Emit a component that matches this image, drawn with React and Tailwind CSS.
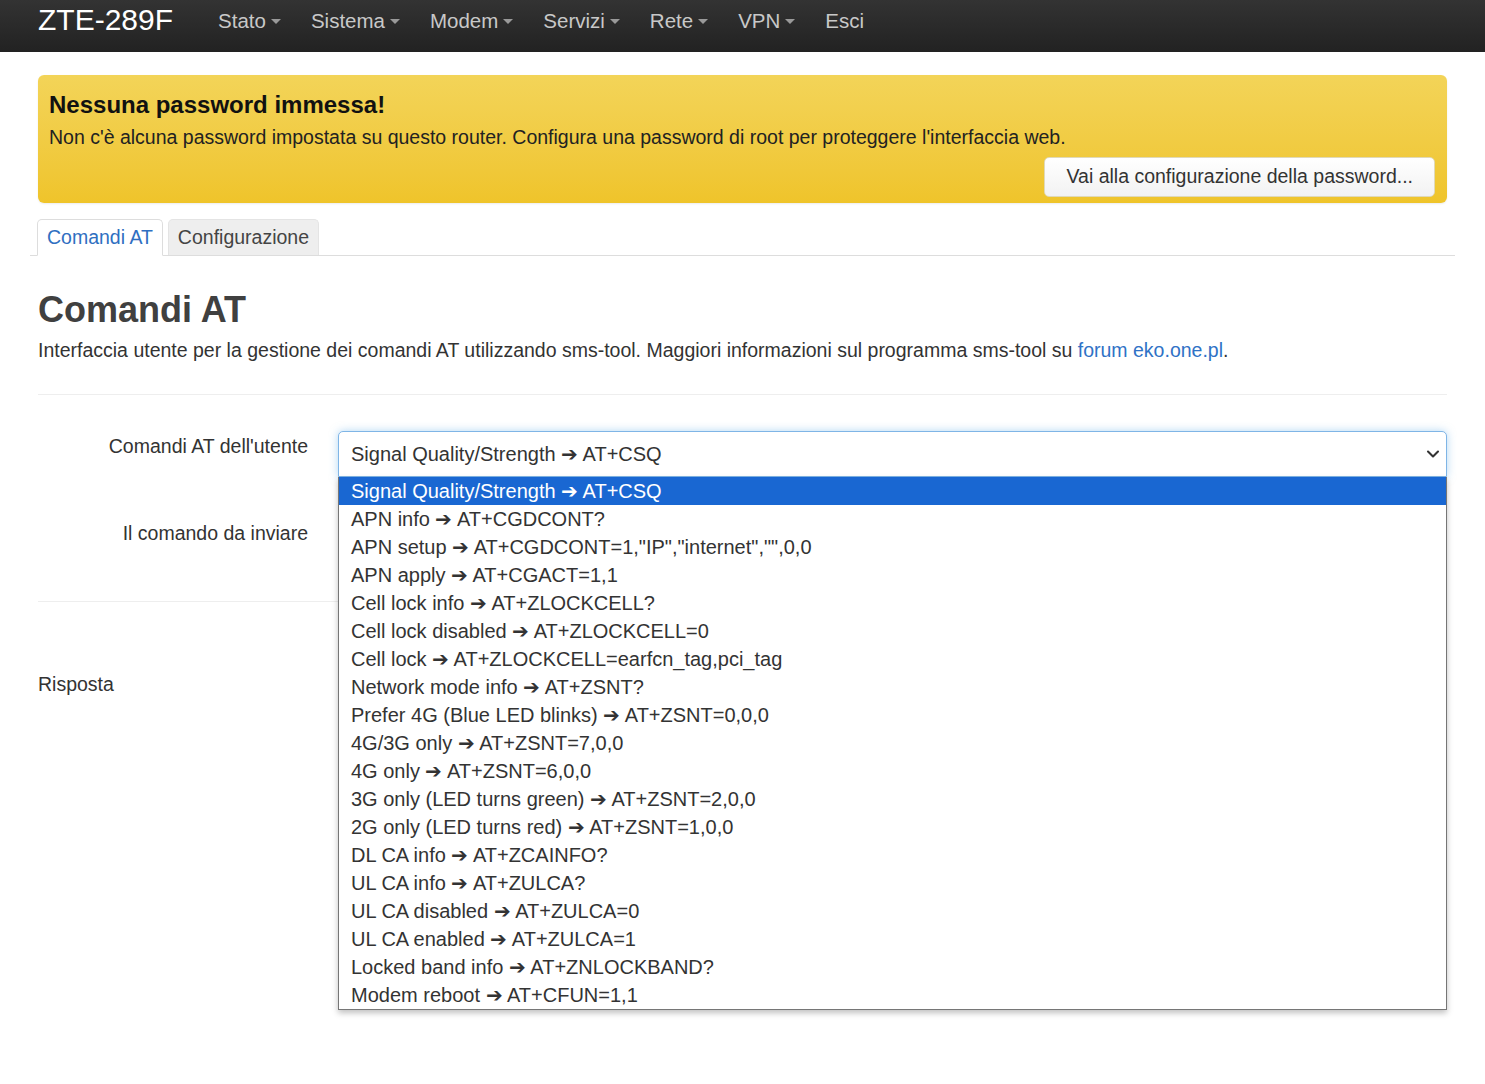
import { ChevronDown } from "lucide-react";

const menu = ["Stato", "Sistema", "Modem", "Servizi", "Rete", "VPN"];

const commands = [
  ["Signal Quality/Strength", "AT+CSQ"],
  ["APN info", "AT+CGDCONT?"],
  ["APN setup", 'AT+CGDCONT=1,"IP","internet","",0,0'],
  ["APN apply", "AT+CGACT=1,1"],
  ["Cell lock info", "AT+ZLOCKCELL?"],
  ["Cell lock disabled", "AT+ZLOCKCELL=0"],
  ["Cell lock", "AT+ZLOCKCELL=earfcn_tag,pci_tag"],
  ["Network mode info", "AT+ZSNT?"],
  ["Prefer 4G (Blue LED blinks)", "AT+ZSNT=0,0,0"],
  ["4G/3G only", "AT+ZSNT=7,0,0"],
  ["4G only", "AT+ZSNT=6,0,0"],
  ["3G only (LED turns green)", "AT+ZSNT=2,0,0"],
  ["2G only (LED turns red)", "AT+ZSNT=1,0,0"],
  ["DL CA info", "AT+ZCAINFO?"],
  ["UL CA info", "AT+ZULCA?"],
  ["UL CA disabled", "AT+ZULCA=0"],
  ["UL CA enabled", "AT+ZULCA=1"],
  ["Locked band info", "AT+ZNLOCKBAND?"],
  ["Modem reboot", "AT+CFUN=1,1"],
];

function Caret() {
  return <span className="ml-[5px] inline-block h-0 w-0 border-x-[5px] border-t-[5px] border-x-transparent border-t-[#999] align-middle" />;
}

export default function App() {
  return (
    <div className="min-h-[1084px] bg-white text-[#333] font-['Liberation_Sans',Arial,sans-serif]">
      {/* NAVBAR */}
      <div className="flex h-[52px] items-start bg-gradient-to-b from-[#333] to-[#222] px-[38px]">
        <div className="mt-[2px] text-[30px] leading-[36px] text-white">ZTE-289F</div>
        <nav className="ml-[45px] mt-[8px] flex items-center gap-[30px] text-[20.5px] leading-[26px] text-[#c8c8c8]">
          {menu.map((m) => (
            <span key={m} className="flex items-center">
              {m}
              <Caret />
            </span>
          ))}
          <span>Esci</span>
        </nav>
      </div>

      <div className="px-[38px] pt-[23px]">
        {/* ALERT */}
        <div className="rounded-[6px] bg-gradient-to-b from-[#f3d458] to-[#efc42a] px-[11px] pt-[15px] pb-[6px] shadow-[0_1px_2px_rgba(0,0,0,0.08)]">
          <h4 className="text-[24px] font-bold leading-[30px] text-[#111]">Nessuna password immessa!</h4>
          <p className="mt-[4px] text-[19.5px] leading-[26px] text-[#222]">
            Non c'è alcuna password impostata su questo router. Configura una password di root per proteggere l'interfaccia web.
          </p>
          <div className="mt-[7px] flex justify-end">
            <button className="mr-[1px] h-[40px] rounded-[5px] border border-[#e0d9b8] bg-gradient-to-b from-white to-[#f2f2f2] px-[21px] text-[19.5px] text-[#333]">
              Vai alla configurazione della password...
            </button>
          </div>
        </div>

        {/* TABS */}
        <div className="-mx-[8px] mt-[16px] flex gap-[5px] border-b border-[#ddd] px-[7px]">
          <div className="-mb-px rounded-t-[5px] border border-[#ddd] border-b-white bg-white px-[9px] pt-[5px] pb-[5px] text-[19.5px] leading-[25px] text-[#2f6fc1]">
            Comandi AT
          </div>
          <div className="rounded-t-[5px] border border-b-0 border-[#e4e4e4] bg-[#eee] px-[9px] pt-[5px] pb-[5px] text-[19.5px] leading-[25px] text-[#444]">
            Configurazione
          </div>
        </div>

        {/* HEADING */}
        <h2 className="mt-[34px] text-[36px] font-bold leading-[40px] text-[#404040]">Comandi AT</h2>
        <p className="mt-[8px] text-[19.5px] leading-[24px] text-[#333]">
          Interfaccia utente per la gestione dei comandi AT utilizzando sms-tool. Maggiori informazioni sul programma sms-tool su{" "}
          <span className="text-[#2f72c6]">forum eko.one.pl</span>.
        </p>
        <div className="mt-[32px] border-t border-[#eee]" />

        {/* FORM */}
        <div className="relative">
          <div className="mt-[36px] flex items-start gap-[30px]">
            <label className="w-[270px] pt-[2px] text-right text-[19.5px] leading-[26px]">Comandi AT dell'utente</label>
            <div className="relative flex-1">
              <div className="flex h-[46px] items-center justify-between rounded-t-[5px] border border-[#7fb5e6] bg-white pl-[12px] pr-[3px] text-[20px] shadow-[0_0_8px_rgba(102,175,233,0.5)]">
                <span>Signal Quality/Strength ➔ AT+CSQ</span>
                <ChevronDown size={20} strokeWidth={2.5} className="text-[#333]" />
              </div>

              {/* open dropdown list */}
              <div className="absolute left-0 right-0 top-[46px] z-10 border-x border-b border-[#767676] bg-white shadow-[0_3px_6px_rgba(0,0,0,0.25)]">
                {commands.map(([name, cmd], i) => (
                  <div
                    key={i}
                    className={`h-[28px] pl-[12px] text-[20px] leading-[28px] ${i === 0 ? "bg-[#1967d2] text-white" : "text-[#333]"}`}
                  >
                    {name} ➔ {cmd}
                  </div>
                ))}
              </div>
            </div>
          </div>

          <div className="mt-[40px] flex items-start gap-[30px]">
            <label className="w-[270px] pt-[3px] text-right text-[19.5px] leading-[26px]">Il comando da inviare</label>
            <div className="flex-1">
              <input className="h-[46px] w-full rounded-[5px] border border-[#ccc]" />
            </div>
          </div>

          <div className="mt-[38px] border-t border-[#eee]" />

          <div className="mt-[69px] text-[19.5px] leading-[26px]">Risposta</div>
        </div>
      </div>
    </div>
  );
}
